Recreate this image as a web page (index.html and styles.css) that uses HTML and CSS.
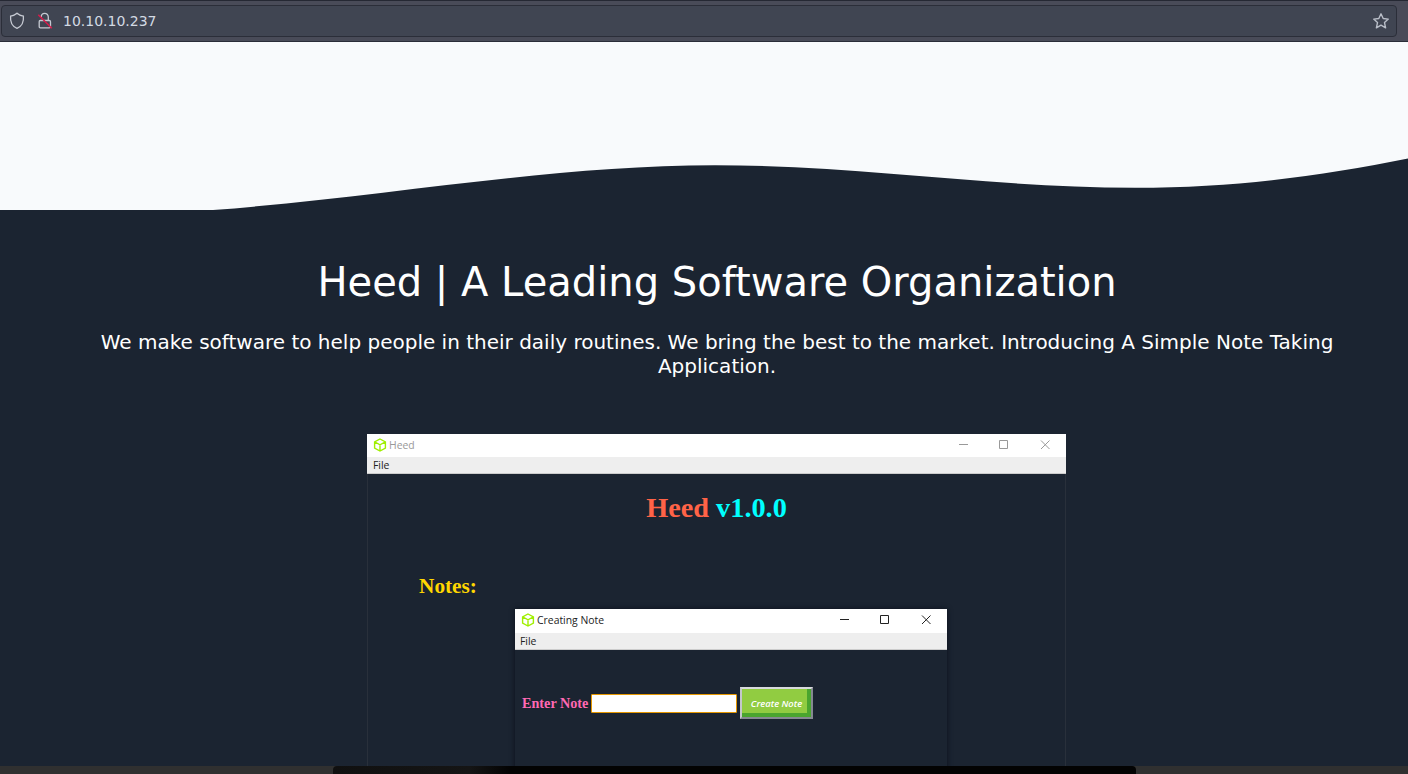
FILE: index.html
```html
<!DOCTYPE html>
<html lang="en">
<head>
<meta charset="utf-8">
<title>Heed</title>
<link rel="stylesheet" href="styles.css">
</head>
<body>
<div class="screen">
  <header class="toolbar">
    <div class="urlbar">
      <svg class="shield" viewBox="0 0 16 18"><path d="M8 1.2 C10 3 12.3 3.8 14.4 4.1 C14.9 9.6 13 14.3 8 16.3 C3 14.3 1.1 9.6 1.6 4.1 C3.7 3.8 6 3 8 1.2Z"/></svg>
      <svg class="lock" viewBox="0 0 16 18"><path d="M4.2 5.2 C4.2 .2 11.2 .1 11.3 5 L11.3 8.5 M3.2 8.5H12.3Q13.5 8.5 13.5 9.7V14.6Q13.5 15.8 12.3 15.8H3.4Q2.2 15.8 2.2 14.6V9.7Q2.2 8.5 3.2 8.5"/><path class="slash" d="M1.3 2.7 L14.8 16.2"/></svg>
      <span class="address">10.10.10.237</span>
      <svg class="star" viewBox="0 0 18 18"><path d="M9 1.8 L11.2 6.5 L16.3 7.1 L12.5 10.6 L13.6 15.8 L9 13.2 L4.4 15.8 L5.5 10.6 L1.7 7.1 L6.8 6.5Z"/></svg>
    </div>
  </header>
  <main class="page">
    <svg class="wave" viewBox="0 42 1408 168"><path d="M213 210 C385 197 550 165.3 715 165.3 C860 165.3 990 187.7 1135 187.7 C1240 187.7 1325 175 1408 158.5 V210Z"/></svg>
    <section class="hero">
      <h1>Heed | A Leading Software Organization</h1>
      <p>We make software to help people in their daily routines. We bring the best to the market. Introducing A Simple Note Taking Application.</p>
      <div class="window">
        <div class="titlebar inactive">
          <svg class="cube" viewBox="0 0 14 14"><path d="M7 1 L12.4 3.9V10.1L7 13L1.6 10.1V3.9Z M1.6 3.9L7 6.8L12.4 3.9M7 6.8V13"/></svg>
          <span class="name">Heed</span>
          <svg class="controls" viewBox="0 0 92 10"><path d="M0 4.5H9M40.5 .5H48.5V8.5H40.5ZM82 .5L90.5 9M90.5 .5L82 9"/></svg>
        </div>
        <div class="menubar">File</div>
        <div class="body">
          <h2><span class="brand">Heed</span> v1.0.0</h2>
          <h3>Notes:</h3>
          <div class="dialog">
            <div class="titlebar">
              <svg class="cube" viewBox="0 0 14 14"><path d="M7 1 L12.4 3.9V10.1L7 13L1.6 10.1V3.9Z M1.6 3.9L7 6.8L12.4 3.9M7 6.8V13"/></svg>
              <span class="name">Creating Note</span>
              <svg class="controls" viewBox="0 0 92 10"><path d="M0 4.5H9M40.5 .5H48.5V8.5H40.5ZM82 .5L90.5 9M90.5 .5L82 9"/></svg>
            </div>
            <div class="menubar">File</div>
            <div class="form">
              <label for="note">Enter Note</label>
              <input id="note" type="text">
              <button type="button">Create Note</button>
            </div>
          </div>
        </div>
      </div>
    </section>
  </main>
  <footer class="dock"><div class="dock-panel"></div></footer>
</div>
</body>
</html>
```
FILE: styles.css
```css
* { box-sizing: border-box; }
body { margin: 0; font-family: "DejaVu Sans", sans-serif; }
svg { display: block; flex: none; fill: none; }
.screen { width: 1408px; height: 774px; display: flex; flex-direction: column; overflow: hidden; background: #1b2431; }
.toolbar { height: 42px; flex: none; padding: 4px 11px 4px 1px; background: #494b58; border-top: 1px solid #252833; border-bottom: 1px solid #2a2d38; }
.urlbar { height: 32px; display: flex; align-items: center; padding: 0 6px 0 8px; background: #404552; border: 1px solid #2b2e39; border-radius: 4px; }
.shield, .lock { width: 16px; height: 18px; stroke: #c5c9d2; stroke-width: 1.3; }
.shield { margin-left: -1px; }
.lock { margin-left: 12px; }
.lock .slash { stroke: #d81b4a; stroke-width: 1.5; }
.address { margin-left: 10px; font-size: 14px; line-height: 16px; color: #d3dae3; }
.star { width: 18px; height: 18px; margin-left: auto; stroke: #b9bec8; stroke-width: 1.4; stroke-linejoin: round; }
.page { height: 724px; flex: none; overflow: hidden; }
.wave { width: 1408px; height: 168px; background: #f8fafc; }
.wave path { fill: #1b2431; }
.hero { margin-left: 26px; width: 1382px; display: flex; flex-direction: column; align-items: center; color: #fff; }
h1 { margin: 48px 0 0; font-size: 40px; line-height: 48px; font-weight: 400; white-space: nowrap; }
.hero p { width: 1270px; margin: 24px 0 0; font-size: 20px; line-height: 24px; text-align: center; }
.window { width: 699px; margin: 56px 1px 0 0; border: 1px solid #29303b; border-top: 0; }
.titlebar { height: 23px; margin: 0 -1px; padding: 0 15px 1px 6px; display: flex; align-items: center; background: #fff; color: #222; stroke: #222; }
.titlebar.inactive { color: #999; stroke: #999; }
.cube { width: 14px; height: 14px; stroke: #9fef00; stroke-width: 1.4; }
.name, .menubar { font-family: "Open Sans", sans-serif; font-size: 10.4px; stroke: none; }
.name { margin-left: 2px; }
.controls { width: 92px; height: 10px; margin-left: auto; }
.menubar { height: 17px; margin: 0 -1px; padding-left: 6px; line-height: 16px; color: #222; background: #eee; border-bottom: 1px solid #ccc; }
.body { height: 310px; padding-top: 18px; font-family: "Liberation Serif", serif; }
h2 { margin: 0; font-size: 28.3px; line-height: 32px; text-align: center; color: #0ff; }
.brand { color: #ff6347; }
h3 { margin: 50px 0 0 51px; font-size: 21.3px; line-height: 24px; color: #ffd700; }
.dialog { width: 432px; height: 180px; margin: 11px 0 0 147px; box-shadow: 0 0 5px #0b101a; }
.dialog .titlebar, .dialog .menubar { margin: 0; }
.dialog .menubar { padding-left: 5px; }
.dialog .titlebar { height: 24px; padding-bottom: 2px; }
.form { display: flex; align-items: center; padding: 37px 0 0 7px; }
label { width: 69px; font-size: 14.2px; font-weight: 700; line-height: 16px; padding-bottom: 1px; color: #ff69b4; white-space: nowrap; }
input { width: 146px; height: 19px; padding: 0; border: 1px solid #e59700; border-radius: 1px; background: #fff; }
button { width: 73px; height: 32px; margin-left: 3px; padding: 0; border: 2px solid; border-color: #d8dadd #858991 #858991 #c4c7cb; background: #91cc41; box-shadow: inset -4px -4px #4aa52e; color: #fff; font: italic 600 9.4px "Open Sans", sans-serif; white-space: nowrap; }
.dock { height: 8px; flex: none; background: #303030; }
.dock-panel { width: 803px; height: 8px; margin-left: 333px; background: linear-gradient(90deg, #101010, #151515 17%, #030303 22%); border-radius: 4px 4px 0 0; }
```
